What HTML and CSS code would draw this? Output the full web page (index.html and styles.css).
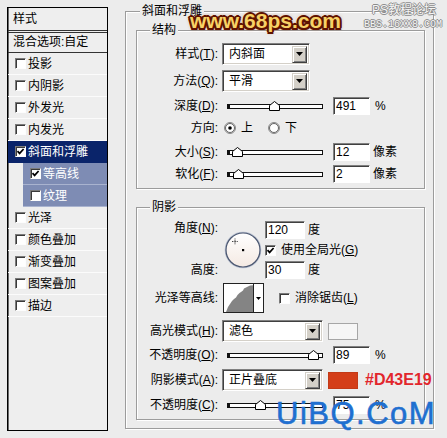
FILE: index.html
```html
<!DOCTYPE html>
<html lang="zh-CN">
<head>
<meta charset="utf-8">
<title>图层样式 - 斜面和浮雕</title>
<link rel="stylesheet" href="styles.css">
</head>
<body>
<div class="app">
  <aside class="styles">
    <div class="styles-head">样式</div>
    <div class="blend">混合选项:自定</div>
    <ul class="fx-list">
      <li class="fx"><span class="cb"></span>投影</li>
      <li class="fx"><span class="cb"></span>内阴影</li>
      <li class="fx"><span class="cb"></span>外发光</li>
      <li class="fx"><span class="cb"></span>内发光</li>
      <li class="fx active"><span class="cb"><svg viewBox="0 0 9 9" class="tick"><path d="M1.5 4.2 L3.6 6.4 L7.6 2"/></svg></span>斜面和浮雕</li>
      <li class="fx sub"><span class="cb"><svg viewBox="0 0 9 9" class="tick"><path d="M1.5 4.2 L3.6 6.4 L7.6 2"/></svg></span>等高线</li>
      <li class="fx sub"><span class="cb"></span>纹理</li>
      <li class="fx"><span class="cb"></span>光泽</li>
      <li class="fx"><span class="cb"></span>颜色叠加</li>
      <li class="fx"><span class="cb"></span>渐变叠加</li>
      <li class="fx"><span class="cb"></span>图案叠加</li>
      <li class="fx"><span class="cb"></span>描边</li>
    </ul>
  </aside>

  <fieldset class="group outer">
    <legend>斜面和浮雕</legend>

    <fieldset class="group inner">
      <legend>结构</legend>
      <div class="row tall r-style">
        <span class="lbl">样式(<u>T</u>):</span>
        <div class="select w88"><span class="val">内斜面</span><span class="btn"><svg viewBox="0 0 7 4" class="arrow"><path d="M0 0H7L3.5 4Z"/></svg></span></div>
      </div>
      <div class="row tall r-method">
        <span class="lbl">方法(<u>Q</u>):</span>
        <div class="select w88"><span class="val">平滑</span><span class="btn"><svg viewBox="0 0 7 4" class="arrow"><path d="M0 0H7L3.5 4Z"/></svg></span></div>
      </div>
      <div class="row r-depth">
        <span class="lbl">深度(<u>D</u>):</span>
        <div class="slider"><div class="track"></div><svg class="thumb" style="left:47px" viewBox="0 0 11 10"><path d="M0.5 9.5V4.5L5.5 0.5L10.5 4.5V9.5Z"/></svg></div>
        <span class="num">491</span><span class="unit">%</span>
      </div>
      <div class="row r-dir">
        <span class="lbl">方向:</span>
        <svg class="radio first" viewBox="0 0 12 12"><circle cx="6" cy="6" r="5.5" class="rr-out"/><circle cx="6" cy="6" r="4.5" class="rr-in"/><circle cx="6" cy="6" r="1.8" class="rr-dot"/></svg>
        <span class="rtext">上</span>
        <svg class="radio second" viewBox="0 0 12 12"><circle cx="6" cy="6" r="5.5" class="rr-out"/><circle cx="6" cy="6" r="4.5" class="rr-in"/></svg>
        <span class="rtext">下</span>
      </div>
      <div class="row r-size">
        <span class="lbl">大小(<u>S</u>):</span>
        <div class="slider"><div class="track"></div><svg class="thumb" style="left:10px" viewBox="0 0 11 10"><path d="M0.5 9.5V4.5L5.5 0.5L10.5 4.5V9.5Z"/></svg></div>
        <span class="num">12</span><span class="unit px">像素</span>
      </div>
      <div class="row r-soften">
        <span class="lbl">软化(<u>F</u>):</span>
        <div class="slider"><div class="track"></div><svg class="thumb" style="left:11px" viewBox="0 0 11 10"><path d="M0.5 9.5V4.5L5.5 0.5L10.5 4.5V9.5Z"/></svg></div>
        <span class="num">2</span><span class="unit px">像素</span>
      </div>
    </fieldset>

    <fieldset class="group inner shadow">
      <legend>阴影</legend>
      <div class="angle">
        <span class="lbl a-l1">角度(<u>N</u>):</span>
        <svg class="dial" viewBox="0 0 38 38">
          <defs><linearGradient id="dg" x1="0" y1="0" x2="0" y2="1"><stop offset="0" stop-color="#ffffff"/><stop offset="1" stop-color="#f4e9e2"/></linearGradient></defs>
          <circle cx="19" cy="19" r="17.6" fill="url(#dg)" stroke="#b9c1d1" stroke-width="1.4"/>
          <circle cx="19" cy="19" r="17" fill="none" stroke="#4b5770" stroke-width="1.2"/>
          <path d="M8 10.5H14M11 7.5V13.5" stroke="#333" stroke-width="0.9" stroke-dasharray="1 0.6"/>
          <rect x="18" y="18" width="2.2" height="2.2" fill="#000"/>
        </svg>
        <div class="a-c1"><span class="num w40">120</span><span class="unit deg">度</span></div>
        <div class="a-c2"><span class="cb"><svg viewBox="0 0 9 9" class="tick"><path d="M1.5 4.2 L3.6 6.4 L7.6 2"/></svg></span><span class="cbtext">使用全局光(<u>G</u>)</span></div>
        <span class="lbl a-l3">高度:</span>
        <div class="a-c3"><span class="num w40">30</span><span class="unit deg">度</span></div>
      </div>
      <div class="row contour">
        <span class="lbl">光泽等高线:</span>
        <div class="curve">
          <svg class="curve-img" viewBox="0 0 29 28"><path d="M2 28L4 23L6 20L8 17L10 15L12 13.5L13.5 11L15.5 9L17 8L19 6.5L20 4.5L22 3.5L24 2.5L26 1.5L29 1.2V28Z" fill="#848484"/></svg>
          <span class="curve-btn"><svg viewBox="0 0 5 3" class="arrow small"><path d="M0 0H5L2.5 3Z"/></svg></span>
        </div>
        <span class="cb aa"></span><span class="cbtext">消除锯齿(<u>L</u>)</span>
      </div>
      <div class="row tall r-hl">
        <span class="lbl">高光模式(<u>H</u>):</span>
        <div class="select w101"><span class="val">滤色</span><span class="btn"><svg viewBox="0 0 7 4" class="arrow"><path d="M0 0H7L3.5 4Z"/></svg></span></div>
        <span class="swatch light"></span>
      </div>
      <div class="row r-op1">
        <span class="lbl">不透明度(<u>O</u>):</span>
        <div class="slider"><div class="track"></div><svg class="thumb" style="left:86px" viewBox="0 0 11 10"><path d="M0.5 9.5V4.5L5.5 0.5L10.5 4.5V9.5Z"/></svg></div>
        <span class="num">89</span><span class="unit">%</span>
      </div>
      <div class="row tall r-sh">
        <span class="lbl">阴影模式(<u>A</u>):</span>
        <div class="select w101"><span class="val">正片叠底</span><span class="btn"><svg viewBox="0 0 7 4" class="arrow"><path d="M0 0H7L3.5 4Z"/></svg></span></div>
        <span class="swatch red"></span>
        <span class="hex">#D43E19</span>
      </div>
      <div class="row r-op2">
        <span class="lbl">不透明度(<u>C</u>):</span>
        <div class="slider"><div class="track"></div><svg class="thumb" style="left:33px" viewBox="0 0 11 10"><path d="M0.5 9.5V4.5L5.5 0.5L10.5 4.5V9.5Z"/></svg></div>
        <span class="num">75</span><span class="unit">%</span>
      </div>
    </fieldset>
  </fieldset>
</div>

<div class="wm-68">www.68ps.com</div>
<div class="wm-ps">PS教程论坛</div>
<div class="wm-bbs">BBS.16XX8.COM</div>
<div class="wm-uibq">UiBQ.CoM</div>
</body>
</html>
```

FILE: styles.css
```css
* { box-sizing: border-box; }
html, body { margin: 0; padding: 0; }
body {
  width: 447px;
  height: 438px;
  overflow: hidden;
  position: relative;
  background: #ececec;
  font-family: "Liberation Sans", "Noto Sans CJK SC", sans-serif;
  font-size: 12px;
  line-height: 14px;
  color: #000;
}
u { text-decoration: underline; text-underline-offset: 1px; }

.app { display: flex; align-items: flex-start; }

/* ---------- left style list ---------- */
.styles {
  margin: 7px 0 0 7px;
  width: 101px;
  height: 424px;
  border: 1px solid #000;
  box-shadow: inset 1px 0 0 #6a6a6a;
  background: #eeeeee;
}
.styles-head {
  height: 25px;
  line-height: 22px;
  padding-left: 5px;
  border-bottom: 3px double #333;
}
.blend {
  height: 20px;
  line-height: 19px;
  padding-left: 5px;
  border-bottom: 1px solid #333;
}
.fx-list { list-style: none; margin: 0; padding: 0; }
.fx {
  height: 22px;
  display: flex;
  align-items: center;
  gap: 2px;
  padding-left: 7px;
  border-bottom: 1px solid #fbfbfb;
}
.fx.active { background: #0a246a; color: #fff; border-bottom-color: #0a246a; }
.fx.sub { margin-left: 15px; padding-left: 7px; background: #7e8cb4; color: #fff; border-bottom-color: #a9b3cf; }

.cb {
  flex: none;
  width: 11px;
  height: 11px;
  background: #fff;
  border: 1px solid;
  border-color: #7a7a7a #fdfdfd #fdfdfd #7a7a7a;
  box-shadow: inset 1px 1px 0 #3a3a3a;
  display: inline-flex;
  align-items: center;
  justify-content: center;
}
.tick { width: 9px; height: 9px; }
.tick path { fill: none; stroke: #000; stroke-width: 1.7; }

/* ---------- group boxes ---------- */
.group {
  margin: 0;
  padding: 0;
  min-width: 0;
  border: 1px solid #9c9c9c;
  box-shadow: inset 1px 1px 0 #fff, 1px 1px 0 #fff;
}
.group > legend {
  padding: 0 2px;
  line-height: 14px;
  background: #ececec;
}
.outer {
  margin: 4px 0 0 17px;
  width: 309px;
  padding-bottom: 8px;
}
.outer > legend { margin-left: 14px; }
.inner {
  margin: 5px 8px 0 10px;
  padding-bottom: 5px;
}
.inner > legend { margin-left: 13px; }
.inner.shadow { margin-top: 11px; }

/* ---------- rows ---------- */
.row { display: flex; align-items: center; height: 18px; }
.row.tall { height: 22px; }
.lbl { flex: none; width: 81px; text-align: right; white-space: nowrap; }

.r-style { margin-top: 6px; }
.r-method { margin-top: 5px; }
.r-depth { margin-top: 5px; }
.r-dir { margin-top: 4px; }
.r-size { margin-top: 6px; }
.r-soften { margin-top: 4px; }

.select {
  flex: none;
  margin-left: 4px;
  height: 22px;
  background: #fff;
  border: 1px solid;
  border-color: #808080 #fff #fff #808080;
  box-shadow: inset 1px 1px 0 #404040, inset -1px -1px 0 #d4d0c8;
  display: flex;
  align-items: center;
  justify-content: space-between;
  padding: 2px 2px 2px 6px;
}
.w88 { width: 88px; }
.w101 { width: 101px; }
.btn {
  width: 15px;
  height: 17px;
  background: #d4d0c8;
  border: 1px solid;
  border-color: #d4d0c8 #404040 #404040 #d4d0c8;
  box-shadow: inset 1px 1px 0 #fff, inset -1px -1px 0 #808080;
  display: flex;
  align-items: center;
  justify-content: center;
}
.arrow { width: 7px; height: 4px; fill: #000; }
.arrow.small { width: 5px; height: 3px; }

.slider {
  position: relative;
  flex: none;
  margin-left: 4px;
  width: 102px;
  height: 18px;
  padding-left: 5px;
  display: flex;
  align-items: center;
}
.track {
  width: 96px;
  height: 5px;
  background: #fff;
  border: 1px solid #111;
  border-left-width: 3px;
}
.thumb {
  position: absolute;
  top: 4px;
  width: 11px;
  height: 10px;
}
.thumb path { fill: #fff; stroke: #000; stroke-width: 1; }

.num {
  flex: none;
  margin-left: 9px;
  width: 37px;
  height: 18px;
  background: #fff;
  border: 1px solid;
  border-color: #808080 #fff #fff #808080;
  box-shadow: inset 1px 1px 0 #404040;
  padding-left: 2px;
  line-height: 16px;
}
.num.w40 { width: 40px; margin-left: 1px; }
.unit { flex: none; margin-left: 5px; }
.unit.px { margin-left: 3px; }
.unit.deg { margin-left: 3px; }

.radio { flex: none; width: 12px; height: 12px; }
.radio.first { margin-left: 6px; }
.radio.second { margin-left: 15px; }
.rr-out { fill: none; stroke: #8a8a8a; stroke-width: 1; }
.rr-in { fill: #fff; stroke: #404040; stroke-width: 0.8; }
.rr-dot { fill: #000; }
.rtext { margin-left: 5px; }

/* ---------- shadow ---------- */
.angle {
  display: grid;
  grid-template-columns: 81px 46px auto;
  grid-template-rows: 18px 18px 18px;
  row-gap: 2px;
  margin-top: 7px;
  align-items: center;
}
.a-l1 { grid-column: 1; grid-row: 1; align-self: start; }
.a-l3 { grid-column: 1; grid-row: 3; }
.dial { grid-column: 2; grid-row: 1 / 4; justify-self: center; align-self: center; width: 38px; height: 38px; margin-left: 4px; }
.a-c1, .a-c2, .a-c3 { grid-column: 3; display: flex; align-items: center; }
.a-c1 { grid-row: 1; }
.a-c2 { grid-row: 2; padding-left: 1px; }
.a-c3 { grid-row: 3; }
.cbtext { margin-left: 5px; white-space: nowrap; }

.contour { height: 30px; margin-top: 4px; }
.curve {
  flex: none;
  margin-left: 5px;
  width: 41px;
  height: 30px;
  border: 1px solid #222;
  background: #fff;
  display: flex;
}
.curve-img { width: 29px; height: 28px; }
.curve-btn {
  flex: none;
  width: 10px;
  border-left: 1px solid #222;
  display: flex;
  align-items: center;
  justify-content: center;
}
.cb.aa { margin-left: 15px; }

.r-hl { margin-top: 7px; }
.r-op1 { margin-top: 4px; }
.r-sh { margin-top: 5px; }
.r-op2 { margin-top: 5px; }

.swatch {
  flex: none;
  margin-left: 5px;
  width: 30px;
  height: 17px;
  border: 1px solid #8c8c8c;
}
.swatch.light { background: #f6f6f6; border-color: #a6a6a6; }
.swatch.red { background: #d43e19; border-color: #c23a17; }
.hex {
  flex: none;
  margin-left: 7px;
  font-family: "Liberation Sans", sans-serif;
  font-weight: bold;
  font-size: 16px;
  line-height: 18px;
  color: #e2262c;
  white-space: nowrap;
}

/* ---------- watermarks (overlays) ---------- */
.wm-68 {
  position: absolute;
  left: 190px;
  top: 10px;
  font-family: "Liberation Sans", sans-serif;
  font-weight: bold;
  font-size: 21px;
  line-height: 21px;
  color: #f7d266;
  text-shadow:
    -2px 0 0 #5e1200, 2px 0 0 #5e1200, 0 -2px 0 #5e1200, 0 2px 0 #5e1200,
    -1.5px -1.5px 0 #5e1200, 1.5px -1.5px 0 #5e1200, -1.5px 1.5px 0 #5e1200, 1.5px 1.5px 0 #5e1200,
    0 0 4px #b0501a;
}
.wm-ps {
  position: absolute;
  left: 372px;
  top: 4px;
  font-size: 12px;
  line-height: 13px;
  color: #f4f4f4;
  text-shadow: -1px 0 0 #8c8c8c, 1px 0 0 #8c8c8c, 0 -1px 0 #8c8c8c, 0 1px 0 #8c8c8c;
}
.wm-bbs {
  position: absolute;
  left: 364px;
  top: 19px;
  font-family: "Liberation Mono", monospace;
  font-size: 10px;
  line-height: 11px;
  color: #f4f4f4;
  text-shadow: -1px 0 0 #8c8c8c, 1px 0 0 #8c8c8c, 0 -1px 0 #8c8c8c, 0 1px 0 #8c8c8c;
}
.wm-uibq {
  position: absolute;
  left: 276px;
  top: 398px;
  font-family: "Liberation Sans", sans-serif;
  font-size: 31px;
  line-height: 31px;
  letter-spacing: 1.5px;
  color: #1f6fd0;
  -webkit-text-stroke: 0.6px #1f6fd0;
}
```
